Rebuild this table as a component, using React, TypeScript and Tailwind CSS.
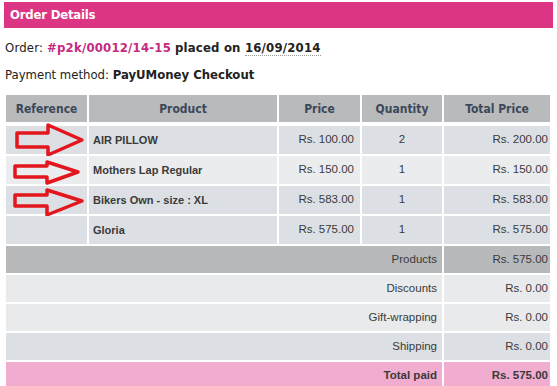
import React from 'react';

const tahoma = "font-['DejaVu_Sans_Condensed','DejaVu_Sans',sans-serif]";
const arial = "font-['Liberation_Sans',Arial,sans-serif]";

type Item = { name: string; price: string; qty: number; total: string; arrow?: number[][]; light?: boolean };

const items: Item[] = [
  { name: 'AIR PILLOW', price: 'Rs. 100.00', qty: 2, total: 'Rs. 200.00', arrow: [[11, 7], [42, 7], [42, -1], [76, 14], [42, 29], [42, 21], [11, 21]] },
  { name: 'Mothers Lap Regular', price: 'Rs. 150.00', qty: 1, total: 'Rs. 150.00', light: true, arrow: [[9, 10], [41, 10], [41, 6], [72, 16], [41, 27], [41, 21], [9, 21]] },
  { name: 'Bikers Own - size : XL', price: 'Rs. 583.00', qty: 1, total: 'Rs. 583.00', arrow: [[9, 9], [41, 9], [41, 4], [76, 15], [41, 29], [41, 20], [9, 20]] },
  { name: 'Gloria', price: 'Rs. 575.00', qty: 1, total: 'Rs. 575.00' },
];

const summary = [
  { label: 'Products', value: 'Rs. 575.00', bg: 'bg-[#b8b9bb]' },
  { label: 'Discounts', value: 'Rs. 0.00', bg: 'bg-[#e9eaec]' },
  { label: 'Gift-wrapping', value: 'Rs. 0.00', bg: 'bg-[#e9eaec]' },
  { label: 'Shipping', value: 'Rs. 0.00', bg: 'bg-[#dce0e4]' },
];

function Arrow({ pts }: { pts: number[][] }) {
  return (
    <svg className="absolute left-0 top-0 overflow-visible" width="81" height="28">
      <polygon
        points={pts.map((p) => p.join(',')).join(' ')}
        fill="none"
        stroke="#e2161c"
        strokeWidth="3.5"
        strokeLinejoin="round"
      />
    </svg>
  );
}

export default function App() {
  return (
    <div className="w-[557px] h-[386px] overflow-hidden bg-white">
      <div className="mx-[4px] mt-[2px] h-[26px] bg-[#dc3584] flex items-center px-[6px]">
        <h2 className={`${tahoma} text-white font-bold text-[13px] tracking-[-0.2px]`}>Order Details</h2>
      </div>

      <p className={`${tahoma} text-[13px] text-[#222] ml-[5px] mt-[12px] leading-[16px] tracking-[0.2px]`}>
        Order: <span className="font-bold text-[#c62a80]">#p2k/00012/14-15</span>{' '}
        <span className="font-bold">placed on </span>
        <span className="font-bold border-b border-dotted border-[#999]">16/09/2014</span>
      </p>
      <p className={`${tahoma} text-[13px] text-[#222] ml-[5px] mt-[11px] leading-[16px]`}>
        Payment method: <span className="font-bold">PayUMoney Checkout</span>
      </p>

      <div className="ml-[6px] mt-[12px] w-[544px]">
        <div className={`grid grid-cols-[81px_188px_81px_80px_106px] gap-[2px] ${tahoma} text-[12px] font-bold text-[#3c4858]`}>
          {['Reference', 'Product', 'Price', 'Quantity', 'Total Price'].map((h) => (
            <div key={h} className="h-[27px] bg-[#b9babc] flex items-center justify-center">
              {h}
            </div>
          ))}
        </div>

        <div className={`mt-[4px] grid grid-cols-[81px_188px_81px_80px_106px] gap-[2px] ${arial} text-[11.5px] text-[#3a3a3a]`}>
          {items.map((it) => {
            const bg = it.light ? 'bg-[#ebecee]' : 'bg-[#dce0e4]';
            return (
              <React.Fragment key={it.name}>
                <div className={`relative h-[28px] ${bg}`}>{it.arrow && <Arrow pts={it.arrow} />}</div>
                <div className={`h-[28px] ${bg} flex items-center pl-[4px] font-bold text-[11px]`}>{it.name}</div>
                <div className={`h-[28px] ${bg} flex items-center justify-end pr-[6px]`}>{it.price}</div>
                <div className={`h-[28px] ${bg} flex items-center justify-center`}>{it.qty}</div>
                <div className={`h-[28px] ${bg} flex items-center justify-end pr-[2px]`}>{it.total}</div>
              </React.Fragment>
            );
          })}
          {summary.map((s) => (
            <React.Fragment key={s.label}>
              <div className={`col-span-4 h-[27px] ${s.bg} flex items-center justify-end pr-[5px]`}>{s.label}</div>
              <div className={`h-[27px] ${s.bg} flex items-center justify-end pr-[2px]`}>{s.value}</div>
            </React.Fragment>
          ))}
          <div className="col-span-4 h-[27px] bg-[#f1adcf] flex items-center justify-end pr-[5px] font-bold">Total paid</div>
          <div className="h-[27px] bg-[#f1adcf] flex items-center justify-end pr-[2px] font-bold">Rs. 575.00</div>
        </div>
      </div>
    </div>
  );
}
